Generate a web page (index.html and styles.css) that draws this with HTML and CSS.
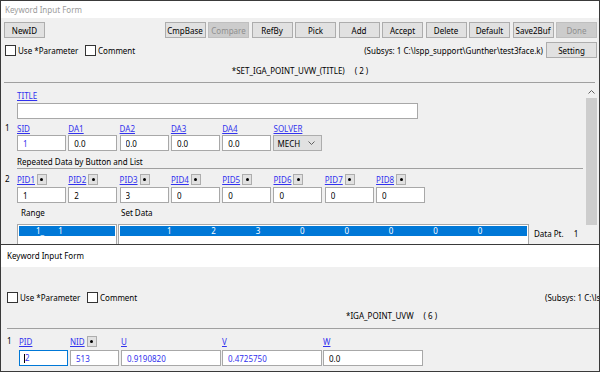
FILE: index.html
```html
<!DOCTYPE html>
<html lang="en">

<head>
    <meta charset="UTF-8">
    <meta name="viewport" content="width=device-width, initial-scale=1.0">
    <title>Keyword Input Form</title>
    <link rel="stylesheet" href="styles.css">
</head>

<body>
    <div class="screen">
        <!-- back window: *SET_IGA_POINT_UVW_(TITLE) -->
        <div class="win win-back">
            <div class="titlebar">Keyword Input Form</div>
            <div class="toolbar">
                <button class="btn">NewID</button>
                <div class="toolbar-group">
                    <button class="btn">CmpBase</button>
                    <button class="btn" disabled>Compare</button>
                    <button class="btn">RefBy</button>
                    <button class="btn">Pick</button>
                    <button class="btn">Add</button>
                    <button class="btn">Accept</button>
                    <button class="btn">Delete</button>
                    <button class="btn">Default</button>
                    <button class="btn">Save2Buf</button>
                    <button class="btn" disabled>Done</button>
                </div>
            </div>
            <div class="optrow">
                <label class="chk chk-param"><span class="box"></span>Use *Parameter</label>
                <label class="chk"><span class="box"></span>Comment</label>
                <span class="subsys">(Subsys: 1 C:\lspp_support\Gunther\test3face.k)</span>
                <button class="btn btn-setting">Setting</button>
            </div>
            <div class="kwname">*SET_IGA_POINT_UVW_(TITLE)<span class="kwcount">( 2 )</span></div>
            <div class="sep"></div>
            <div class="body">
                <div class="fields">
                    <div class="lbl-line title-lbl"><a class="fld">TITLE</a></div>
                    <input type="text" class="inp inp-title">

                    <div class="card card-1">
                        <span class="rownum">1</span>
                        <div class="grid">
                            <div class="cell"><div class="lbl-line"><a class="fld">SID</a></div><input type="text" class="inp inp-blue" value="1"></div>
                            <div class="cell"><div class="lbl-line"><a class="fld">DA1</a></div><input type="text" class="inp" value="0.0"></div>
                            <div class="cell"><div class="lbl-line"><a class="fld">DA2</a></div><input type="text" class="inp" value="0.0"></div>
                            <div class="cell"><div class="lbl-line"><a class="fld">DA3</a></div><input type="text" class="inp" value="0.0"></div>
                            <div class="cell"><div class="lbl-line"><a class="fld">DA4</a></div><input type="text" class="inp" value="0.0"></div>
                            <div class="cell">
                                <div class="lbl-line"><a class="fld">SOLVER</a></div>
                                <div class="combo">MECH
                                    <svg class="combo-arrow" width="7" height="4" viewBox="0 0 7 4"><polyline points="0.5,0.5 3.5,3.5 6.5,0.5" fill="none" stroke="#606060" stroke-width="1"/></svg>
                                </div>
                            </div>
                        </div>
                    </div>

                    <div class="section-lbl">Repeated Data by Button and List</div>
                    <div class="sep sep-inner"></div>

                    <div class="card card-2">
                        <span class="rownum">2</span>
                        <div class="grid">
                            <div class="cell"><div class="lbl-line"><a class="fld">PID1</a><span class="dotbtn"></span></div><input type="text" class="inp" value="1"></div>
                            <div class="cell"><div class="lbl-line"><a class="fld">PID2</a><span class="dotbtn"></span></div><input type="text" class="inp" value="2"></div>
                            <div class="cell"><div class="lbl-line"><a class="fld">PID3</a><span class="dotbtn"></span></div><input type="text" class="inp" value="3"></div>
                            <div class="cell"><div class="lbl-line"><a class="fld">PID4</a><span class="dotbtn"></span></div><input type="text" class="inp" value="0"></div>
                            <div class="cell"><div class="lbl-line"><a class="fld">PID5</a><span class="dotbtn"></span></div><input type="text" class="inp" value="0"></div>
                            <div class="cell"><div class="lbl-line"><a class="fld">PID6</a><span class="dotbtn"></span></div><input type="text" class="inp" value="0"></div>
                            <div class="cell"><div class="lbl-line"><a class="fld">PID7</a><span class="dotbtn"></span></div><input type="text" class="inp" value="0"></div>
                            <div class="cell"><div class="lbl-line"><a class="fld">PID8</a><span class="dotbtn"></span></div><input type="text" class="inp" value="0"></div>
                        </div>
                    </div>

                    <div class="list-head">
                        <span class="range-lbl">Range</span>
                        <span>Set Data</span>
                    </div>
                    <div class="lists">
                        <div class="listbox range-list">
                            <div class="list-sel"><span class="r1">1_</span><span class="r2">1</span></div>
                        </div>
                        <div class="listbox data-list">
                            <div class="list-sel">
                                <span class="val">1</span><span class="val">2</span><span class="val">3</span><span class="val">0</span>
                                <span class="val">0</span><span class="val">0</span><span class="val">0</span><span class="val">0</span>
                            </div>
                        </div>
                        <div class="datapt">Data Pt.<span class="datapt-num">1</span></div>
                    </div>
                </div>
                <div class="vscroll">
                    <div class="vscroll-arrow">
                        <svg width="7" height="4" viewBox="0 0 7 4"><polyline points="0.5,3.5 3.5,0.5 6.5,3.5" fill="none" stroke="#606060" stroke-width="1"/></svg>
                    </div>
                    <div class="vscroll-thumb"></div>
                </div>
            </div>
        </div>

        <!-- front window: *IGA_POINT_UVW -->
        <div class="win win-front">
            <div class="titlebar titlebar-active">Keyword Input Form</div>
            <div class="optrow optrow-front">
                <label class="chk chk-param"><span class="box"></span>Use *Parameter</label>
                <label class="chk chk-comment"><span class="box"></span>Comment</label>
                <span class="subsys subsys-front">(Subsys: 1 C:\lspp_support\Gunther\test3face.k)</span>
            </div>
            <div class="kwname kwname-front">*IGA_POINT_UVW<span class="kwcount">( 6 )</span></div>
            <div class="sep sep-front"></div>
            <div class="card card-front">
                <span class="rownum">1</span>
                <div class="grid grid-front">
                    <div class="cell"><div class="lbl-line"><a class="fld">PID</a></div><div class="inp inp-blue inp-focus">2</div></div>
                    <div class="cell"><div class="lbl-line"><a class="fld">NID</a><span class="dotbtn"></span></div><input type="text" class="inp inp-blue" value="513"></div>
                    <div class="cell"><div class="lbl-line"><a class="fld">U</a></div><input type="text" class="inp inp-blue" value="0.9190820"></div>
                    <div class="cell"><div class="lbl-line"><a class="fld">V</a></div><input type="text" class="inp inp-blue" value="0.4725750"></div>
                    <div class="cell"><div class="lbl-line"><a class="fld">W</a></div><input type="text" class="inp" value="0.0"></div>
                </div>
            </div>
        </div>
    </div>
</body>

</html>
```

FILE: styles.css
```css
body {
    margin: 0;
    font-family: "Noto Sans", sans-serif;
    font-size: 8px;
    color: #000;
}

.screen {
    width: 600px;
    height: 372px;
    box-sizing: border-box;
    border: 1px solid #3a3a3a;
    background-color: #f0f0f0;
    overflow: hidden;
}

.win {
    overflow: hidden;
}

.win-back {
    height: 243px;
}

.titlebar {
    height: 17px;
    line-height: 17px;
    padding-left: 4px;
    background-color: #fff;
    color: #9b9b9b;
}

/* 按钮栏 */
.toolbar {
    display: flex;
    margin-top: 4px;
    padding: 0 2px 0 3px;
}

.toolbar-group {
    display: flex;
    gap: 2.5px;
    margin-left: auto;
}

.btn {
    width: 41px;
    height: 16px;
    padding: 0;
    font-family: inherit;
    font-size: 8px;
    color: #000;
    background-color: #e1e1e1;
    border: 1px solid #adadad;
}

.btn:disabled {
    background-color: #cccccc;
    border-color: #bfbfbf;
    color: #8f8f8f;
}

.btn-setting {
    width: 51px;
    margin-left: 3px;
}

.optrow {
    display: flex;
    align-items: center;
    height: 16px;
    margin-top: 4px;
    padding: 0 2px 0 4px;
}

.chk {
    display: flex;
    flex: none;
    align-items: center;
    white-space: nowrap;
}

.chk-param {
    width: 80px;
}

.box {
    flex: none;
    width: 11px;
    height: 11px;
    box-sizing: border-box;
    margin-right: 2px;
    border: 1px solid #333;
    background-color: #fff;
}

.subsys {
    margin-left: auto;
    white-space: nowrap;
}

.kwname {
    height: 12px;
    line-height: 12px;
    margin-top: 7px;
    text-align: center;
}

.kwcount {
    margin-left: 10px;
}

.sep {
    height: 1px;
    margin: 5px 4px 0 3px;
    background-color: #a0a0a0;
}

/* 字段区域 */
.body {
    display: flex;
}

.fields {
    flex: 1;
    padding: 6px 0 0 4px;
}

.lbl-line {
    display: flex;
    align-items: center;
    height: 12px;
}

.fld {
    color: #3232ee;
    text-decoration: underline;
}

.title-lbl {
    padding-left: 12px;
}

.inp {
    display: block;
    width: 49px;
    height: 16px;
    box-sizing: border-box;
    margin: 0;
    padding: 0 0 0 5px;
    font-family: inherit;
    font-size: 8px;
    line-height: 14px;
    color: #000;
    background-color: #fff;
    border: 1px solid #a8a8a8;
    outline: none;
}

.inp-blue {
    color: #3232ee;
}

.inp-title {
    width: 401px;
    margin: 2px 0 0 12px;
}

.card {
    display: flex;
}

.card-1 {
    margin-top: 3px;
}

.card-1 .inp,
.card-1 .combo {
    margin-top: 1px;
}

.card-2 {
    margin-top: 4px;
}

.card-2 .inp {
    margin-top: 2px;
}

.rownum {
    width: 12px;
    line-height: 12px;
}

.grid {
    display: grid;
    grid-template-columns: repeat(8, 51.3px);
}

.combo {
    display: flex;
    align-items: center;
    justify-content: space-between;
    width: 49px;
    height: 16px;
    box-sizing: border-box;
    padding: 0 6px 0 3px;
    background-color: #e1e1e1;
    border: 1px solid #adadad;
}

.section-lbl {
    height: 12px;
    line-height: 12px;
    margin-top: 5px;
    padding-left: 12px;
}

.sep-inner {
    margin: 0 3px 0 12px;
}

.dotbtn {
    position: relative;
    width: 10px;
    height: 11px;
    box-sizing: border-box;
    margin-left: 2px;
    background-color: #e1e1e1;
    border: 1px solid #adadad;
}

.dotbtn::after {
    content: "";
    position: absolute;
    left: 2.5px;
    top: 3px;
    width: 3px;
    height: 3px;
    border-radius: 50%;
    background-color: #000;
}

.list-head {
    display: flex;
    height: 12px;
    line-height: 12px;
    margin-top: 4px;
    padding-left: 16px;
}

.range-lbl {
    width: 100px;
}

.lists {
    display: flex;
    margin-top: 5px;
    padding-left: 12px;
}

.listbox {
    height: 40px;
    box-sizing: border-box;
    padding: 1px;
    background-color: #fff;
    border: 1px solid #a8a8a8;
}

.range-list {
    width: 100px;
}

.data-list {
    width: 411px;
    margin-left: 1px;
}

.list-sel {
    display: flex;
    height: 10px;
    line-height: 10px;
    color: #fff;
    background-color: #0078d7;
}

.r1 {
    margin-left: 17px;
}

.r2 {
    margin-left: 14px;
}

.val {
    width: 44.4px;
    text-align: center;
    flex: none;
}

.data-list .list-sel {
    padding-left: 27px;
}

.datapt {
    margin: 4px 0 0 5px;
    line-height: 12px;
}

.datapt-num {
    margin-left: 10px;
}

/* 滚动条 */
.vscroll {
    width: 11px;
    height: 160px;
    margin: 3px 2px 0 0;
}

.vscroll-arrow {
    display: flex;
    align-items: center;
    justify-content: center;
    height: 12px;
}

.vscroll-thumb {
    height: 127px;
    background-color: #cdcdcd;
}

/* 前面的窗口 */
.win-front {
    height: 127px;
    border-top: 1px solid #3a3a3a;
}

.titlebar-active {
    height: 22px;
    line-height: 22px;
    padding-left: 6px;
    color: #000;
}

.optrow-front {
    margin-top: 22px;
    padding-left: 6px;
}

.chk-comment {
    width: 458px;
}

.subsys-front {
    flex: none;
    margin-left: 0;
}

.kwname-front {
    margin-top: 5px;
    padding-left: 345px;
    text-align: left;
}

.sep-front {
    margin: 6px 0 0 6px;
}

.card-front {
    margin-top: 6px;
    padding-left: 6px;
}

.card-front .inp {
    margin-top: 3px;
}

.grid-front {
    grid-template-columns: 51px 51px 101px 101px 101px;
}

.grid-front .cell:nth-child(n+3) .inp {
    width: 100px;
}

.inp-focus {
    position: relative;
    border-color: #0078d7;
}

.inp-focus::before {
    content: "";
    position: absolute;
    left: 4px;
    top: 3px;
    width: 1px;
    height: 9px;
    background-color: #000;
}
```
